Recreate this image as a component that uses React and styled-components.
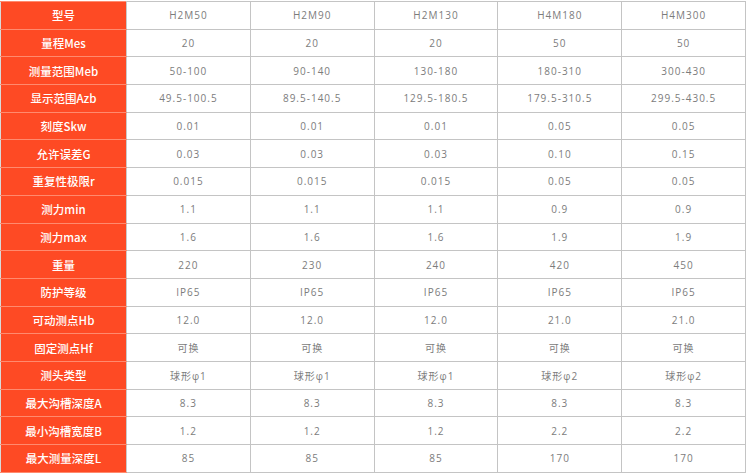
import React from 'react'
import styled, { createGlobalStyle } from 'styled-components'

const GlobalStyle = createGlobalStyle`
	html, body {
		margin: 0;
		padding: 0;
		background: #ffffff;
	}
`

const Page = styled.div`
	width: 749px;
	height: 473px;
	display: flex;
	flex-direction: column;
	overflow: hidden;
	background: #ffffff;
`

const SpecTable = styled.table`
	width: 746px;
	border-collapse: collapse;
	table-layout: fixed;
	margin-top: 1px;
`

const SpecRow = styled.tr`
	height: 27.7px;
`

const SpecName = styled.th`
	width: 125px;
	padding: 0;
	background: #fe4a24;
	color: #ffffff;
	font-family: "Noto Sans CJK SC", "Open Sans", sans-serif;
	font-size: 11.5px;
	font-weight: 500;
	text-align: center;
	border-top: 1px solid #ff8a6e;
	border-bottom: 1px solid #ff8a6e;
	border-left: 1px solid #d9d9d9;
	border-right: 1px solid #c9c9c9;
`

const SpecValue = styled.td`
	padding: 0;
	color: #7c7c7c;
	font-family: "Open Sans", "Noto Sans CJK SC", sans-serif;
	font-size: 10px;
	letter-spacing: 1px;
	text-align: center;
	border: 1px solid #c4c4c4;
`

const BottomEdge = styled.div`
	margin-top: auto;
	height: 2px;
	background: #4a5560;
`

const models = ['H2M50', 'H2M90', 'H2M130', 'H4M180', 'H4M300']

const rows = [
	['型号', models],
	['量程Mes', ['20', '20', '20', '50', '50']],
	['测量范围Meb', ['50-100', '90-140', '130-180', '180-310', '300-430']],
	['显示范围Azb', ['49.5-100.5', '89.5-140.5', '129.5-180.5', '179.5-310.5', '299.5-430.5']],
	['刻度Skw', ['0.01', '0.01', '0.01', '0.05', '0.05']],
	['允许误差G', ['0.03', '0.03', '0.03', '0.10', '0.15']],
	['重复性极限r', ['0.015', '0.015', '0.015', '0.05', '0.05']],
	['测力min', ['1.1', '1.1', '1.1', '0.9', '0.9']],
	['测力max', ['1.6', '1.6', '1.6', '1.9', '1.9']],
	['重量', ['220', '230', '240', '420', '450']],
	['防护等级', ['IP65', 'IP65', 'IP65', 'IP65', 'IP65']],
	['可动测点Hb', ['12.0', '12.0', '12.0', '21.0', '21.0']],
	['固定测点Hf', ['可换', '可换', '可换', '可换', '可换']],
	['测头类型', ['球形φ1', '球形φ1', '球形φ1', '球形φ2', '球形φ2']],
	['最大沟槽深度A', ['8.3', '8.3', '8.3', '8.3', '8.3']],
	['最小沟槽宽度B', ['1.2', '1.2', '1.2', '2.2', '2.2']],
	['最大测量深度L', ['85', '85', '85', '170', '170']],
]

const App = () => (
	<Page>
		<GlobalStyle />
		<SpecTable>
			<tbody>
				{rows.map(([name, values]) => (
					<SpecRow key={name}>
						<SpecName>{name}</SpecName>
						{values.map((value, i) => (
							<SpecValue key={i}>{value}</SpecValue>
						))}
					</SpecRow>
				))}
			</tbody>
		</SpecTable>
		<BottomEdge />
	</Page>
)

export default App
